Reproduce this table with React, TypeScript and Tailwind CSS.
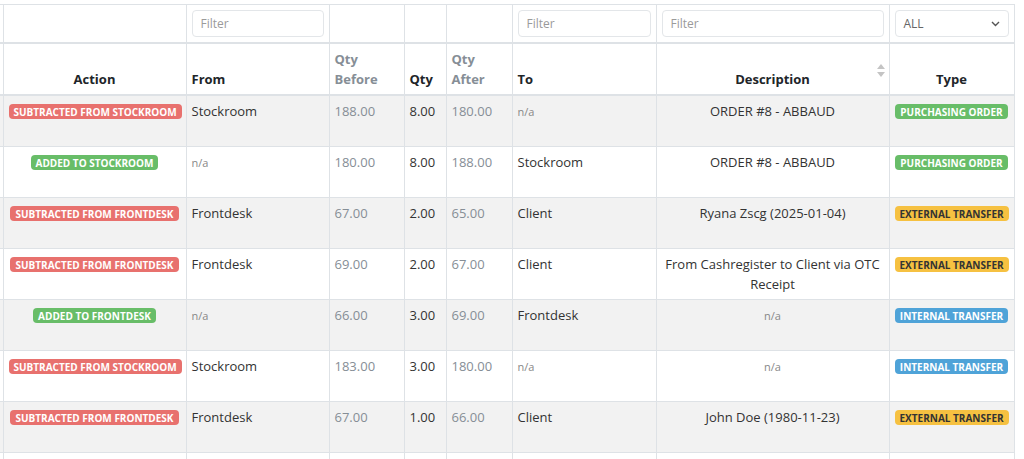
import React from "react";

type Tone = "red" | "green" | "blue" | "yellow";

const toneClass: Record<Tone, string> = {
  red: "bg-[#e8716e] text-white",
  green: "bg-[#68bd68] text-white",
  blue: "bg-[#4fa3d8] text-white",
  yellow: "bg-[#f6c141] text-[#333]",
};

const typeTone: Record<string, Tone> = {
  "PURCHASING ORDER": "green",
  "EXTERNAL TRANSFER": "yellow",
  "INTERNAL TRANSFER": "blue",
};

type Row = {
  action: string;
  from: string | null;
  before: string;
  qty: string;
  after: string;
  to: string | null;
  desc: string | null;
  type: string;
};

const rows: Row[] = [
  { action: "SUBTRACTED FROM STOCKROOM", from: "Stockroom", before: "188.00", qty: "8.00", after: "180.00", to: null, desc: "ORDER #8 - ABBAUD", type: "PURCHASING ORDER" },
  { action: "ADDED TO STOCKROOM", from: null, before: "180.00", qty: "8.00", after: "188.00", to: "Stockroom", desc: "ORDER #8 - ABBAUD", type: "PURCHASING ORDER" },
  { action: "SUBTRACTED FROM FRONTDESK", from: "Frontdesk", before: "67.00", qty: "2.00", after: "65.00", to: "Client", desc: "Ryana Zscg (2025-01-04)", type: "EXTERNAL TRANSFER" },
  { action: "SUBTRACTED FROM FRONTDESK", from: "Frontdesk", before: "69.00", qty: "2.00", after: "67.00", to: "Client", desc: "From Cashregister to Client via OTC Receipt", type: "EXTERNAL TRANSFER" },
  { action: "ADDED TO FRONTDESK", from: null, before: "66.00", qty: "3.00", after: "69.00", to: "Frontdesk", desc: null, type: "INTERNAL TRANSFER" },
  { action: "SUBTRACTED FROM STOCKROOM", from: "Stockroom", before: "183.00", qty: "3.00", after: "180.00", to: null, desc: null, type: "INTERNAL TRANSFER" },
  { action: "SUBTRACTED FROM FRONTDESK", from: "Frontdesk", before: "67.00", qty: "1.00", after: "66.00", to: "Client", desc: "John Doe (1980-11-23)", type: "EXTERNAL TRANSFER" },
];

function Label({ text, tone }: { text: string; tone: Tone }) {
  return (
    <span
      className={`inline-block rounded-[4px] px-[5px] pt-[3px] pb-[2px] text-[10px] font-bold leading-[10px] whitespace-nowrap ${toneClass[tone]}`}
    >
      {text}
    </span>
  );
}

function Na() {
  return <span className="text-[11px] text-[#888]">n/a</span>;
}

function FilterInput() {
  return (
    <input
      placeholder="Filter"
      className="block h-[27px] w-full rounded-[4px] border border-[#e3e6e9] bg-white px-[8px] text-[12px] font-normal text-[#555] placeholder:text-[#9a9a9a] focus:outline-none"
    />
  );
}

function SortIcon() {
  return (
    <svg width="8" height="13" viewBox="0 0 8 13" className="absolute right-[4px] top-[20px]">
      <path d="M4 0 L8 5 L0 5 Z" fill="#c4c4c4" />
      <path d="M4 13 L8 8 L0 8 Z" fill="#c4c4c4" />
    </svg>
  );
}

const cell = "border border-[#dee2e6] px-[5px] pt-[5px] align-top h-[51px]";
const head = "border border-[#dee2e6] border-b-2 px-[5px] pb-[5px] align-bottom font-bold h-[52px]";
const filt = "border border-[#dee2e6] border-b-2 px-[5px] py-[5px] h-[38px] align-middle font-normal";

export default function App() {
  return (
    <div
      className="h-[459px] w-[1024px] overflow-hidden bg-white pt-[4px] text-[13px] leading-[20px] text-[#333]"
      style={{ fontFamily: '"Open Sans", "Noto Sans", sans-serif' }}
    >
      <table className="w-[1014px] table-fixed border-collapse">
        <colgroup>
          <col className="w-[3px]" />
          <col className="w-[183px]" />
          <col className="w-[143px]" />
          <col className="w-[75px]" />
          <col className="w-[42px]" />
          <col className="w-[66px]" />
          <col className="w-[144px]" />
          <col className="w-[233px]" />
          <col className="w-[125px]" />
        </colgroup>
        <thead>
          <tr>
            <th className="border-y border-b-2 border-[#dee2e6] p-0" />
            <th className={filt} />
            <th className={filt}>
              <FilterInput />
            </th>
            <th className={filt} />
            <th className={filt} />
            <th className={filt} />
            <th className={filt}>
              <FilterInput />
            </th>
            <th className={filt}>
              <FilterInput />
            </th>
            <th className={filt}>
              <div className="flex h-[27px] items-center justify-between rounded-[4px] border border-[#e3e6e9] bg-white pl-[8px] pr-[8px] text-[12px] font-normal text-[#666]">
                <span>ALL</span>
                <svg width="9" height="6" viewBox="0 0 9 6">
                  <path d="M1 1 L4.5 4.5 L8 1" fill="none" stroke="#555" strokeWidth="1.4" />
                </svg>
              </div>
            </th>
          </tr>
          <tr>
            <th className="border-b-2 border-[#dee2e6] p-0" />
            <th className={`${head} text-center text-[#212529]`}>Action</th>
            <th className={`${head} text-left text-[#212529]`}>From</th>
            <th className={`${head} text-left text-[#868e96]`}>
              Qty
              <br />
              Before
            </th>
            <th className={`${head} text-left text-[#212529]`}>Qty</th>
            <th className={`${head} text-left text-[#868e96]`}>
              Qty
              <br />
              After
            </th>
            <th className={`${head} text-left text-[#212529]`}>To</th>
            <th className={`${head} relative text-center text-[#212529]`}>
              Description
              <SortIcon />
            </th>
            <th className={`${head} text-center text-[#212529]`}>Type</th>
          </tr>
        </thead>
        <tbody>
          {rows.map((r, i) => (
            <tr key={i} className={i % 2 === 0 ? "bg-[#f2f2f2]" : "bg-white"}>
              <td className="border-y border-[#dee2e6] p-0" />
              <td className={`${cell} text-center`}>
                <Label text={r.action} tone={r.action.startsWith("ADDED") ? "green" : "red"} />
              </td>
              <td className={cell}>{r.from ?? <Na />}</td>
              <td className={`${cell} text-[#868e96]`}>{r.before}</td>
              <td className={cell}>{r.qty}</td>
              <td className={`${cell} text-[#868e96]`}>{r.after}</td>
              <td className={cell}>{r.to ?? <Na />}</td>
              <td className={`${cell} text-center`}>{r.desc ?? <Na />}</td>
              <td className={`${cell} text-center`}>
                <Label text={r.type} tone={typeTone[r.type]} />
              </td>
            </tr>
          ))}
          <tr className="bg-white">
            <td className="border-t border-[#dee2e6] p-0" />
            <td className={cell} />
            <td className={cell} />
            <td className={cell} />
            <td className={cell} />
            <td className={cell} />
            <td className={cell} />
            <td className={cell} />
            <td className={cell} />
          </tr>
        </tbody>
      </table>
    </div>
  );
}
